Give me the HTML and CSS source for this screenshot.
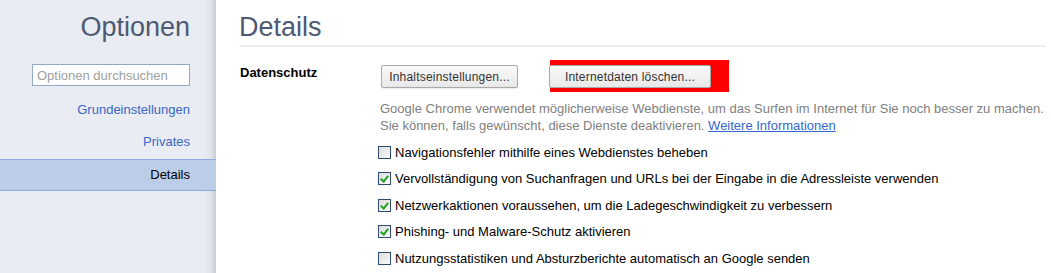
FILE: index.html
```html
<!DOCTYPE html>
<html lang="de">
  <head>
    <meta charset="UTF-8" />
    <title>Optionen - Details</title>
    <link rel="stylesheet" href="styles.css">
  </head>
  <body>
    <div class="page">
      <!-- Seitenleiste -->
      <div class="sidebar">
        <h1 class="side-title">Optionen</h1>
        <div class="search-wrap">
          <input type="text" class="search" placeholder="Optionen durchsuchen" />
        </div>
        <ul class="nav">
          <li class="nav-item">Grundeinstellungen</li>
          <li class="nav-item">Privates</li>
          <li class="nav-item selected">Details</li>
        </ul>
      </div>

      <!-- Inhalt -->
      <div class="main">
        <h2 class="main-title">Details</h2>
        <div class="section">
          <div class="section-label">Datenschutz</div>
          <div class="section-body">
            <div class="buttons">
              <button type="button" class="btn btn-content">Inhaltseinstellungen...</button>
              <span class="marked">
                <button type="button" class="btn btn-clear">Internetdaten löschen...</button>
              </span>
            </div>
            <p class="desc">
              Google Chrome verwendet möglicherweise Webdienste, um das Surfen im Internet für Sie noch besser zu machen.<br />
              Sie können, falls gewünscht, diese Dienste deaktivieren. <a href="#" class="link">Weitere Informationen</a>
            </p>
            <label class="check"><span class="box"></span>Navigationsfehler mithilfe eines Webdienstes beheben</label>
            <label class="check"><span class="box on"></span>Vervollständigung von Suchanfragen und URLs bei der Eingabe in die Adressleiste verwenden</label>
            <label class="check"><span class="box on"></span>Netzwerkaktionen voraussehen, um die Ladegeschwindigkeit zu verbessern</label>
            <label class="check"><span class="box on"></span>Phishing- und Malware-Schutz aktivieren</label>
            <label class="check"><span class="box"></span>Nutzungsstatistiken und Absturzberichte automatisch an Google senden</label>
          </div>
        </div>
      </div>
    </div>
  </body>
</html>
```

FILE: styles.css
```css
/* Grundeinstellungen */
* {
  box-sizing: border-box;
  margin: 0;
  padding: 0;
}

body {
  font-family: Arial, "Liberation Sans", sans-serif;
  font-size: 13px;
  color: #000;
  background: #fff;
  overflow: hidden;
}

.page {
  display: flex;
  height: 273px;
}

/* Seitenleiste */
.sidebar {
  width: 216px;
  flex-shrink: 0;
  background: linear-gradient(to right, #e9ecf2 0, #e9ecf2 204px, #dfe2e8 211px, #c9ccd2 216px);
  padding-right: 26px;
  text-align: right;
}

.side-title {
  font-size: 27px;
  font-weight: normal;
  color: #4e5a73;
  padding-top: 12px;
  height: 64px;
}

.search-wrap {
  padding-left: 32px;
}

.search {
  width: 158px;
  height: 22px;
  border: 1px solid #94a7c4;
  padding: 1px 4px 0;
  font-family: inherit;
  font-size: 13px;
  color: #999;
  outline: none;
}

.search::placeholder {
  color: #a0a0a0;
}

.nav {
  list-style: none;
  margin-top: 9px;
  margin-right: -26px;
}

.nav-item {
  height: 32px;
  line-height: 30px;
  padding-right: 26px;
  color: #3b67c4;
  font-size: 13px;
}

.nav-item.selected {
  background: #bbcde8;
  border-top: 1px solid #8eaadb;
  border-bottom: 1px solid #8eaadb;
  color: #000;
  line-height: 29px;
}

/* Inhalt */
.main {
  flex: 1;
  padding: 0 5px 0 23px;
}

.main-title {
  font-size: 27px;
  font-weight: normal;
  color: #4e5a73;
  padding-top: 12px;
  height: 47px;
  border-bottom: 2px solid #eeeeee;
}

.section {
  display: flex;
  padding-top: 17px;
}

.section-label {
  width: 142px;
  font-weight: bold;
  padding-left: 1px;
  padding-top: 1px;
}

.buttons {
  display: flex;
  gap: 31px;
  align-items: flex-start;
  padding-top: 1px;
}

.btn {
  height: 23px;
  padding: 0;
  font-family: inherit;
  font-size: 12px;
  letter-spacing: 0.2px;
  color: #333;
  background: linear-gradient(#fafafa, #e8e8e8);
  border: 1px solid #a8a8a8;
  border-radius: 2px;
  box-shadow: 0 1px 1px rgba(0, 0, 0, 0.08);
}

.btn-content {
  width: 137px;
}

.btn-clear {
  width: 162px;
}

/* rote Markierung um den Button */
.marked {
  position: relative;
  display: inline-block;
}

.marked::before {
  content: "";
  position: absolute;
  left: 1px;
  top: -5px;
  width: 179px;
  height: 32px;
  background: #ff0000;
}

.marked .btn {
  position: relative;
}

.desc {
  margin-top: 12px;
  margin-left: -1px;
  color: #808080;
  line-height: 17px;
}

.link {
  color: #3366cc;
}

.check {
  display: flex;
  align-items: center;
  height: 26.5px;
  margin-left: -3px;
}

.check:first-of-type {
  margin-top: 5px;
}

.box {
  width: 13px;
  height: 13px;
  border: 1px solid #2f4a6d;
  background: linear-gradient(135deg, #dcdcdc, #fbfbfb);
  margin-right: 4px;
  position: relative;
}

.box.on::after {
  content: "";
  position: absolute;
  left: 3px;
  top: 1px;
  width: 3px;
  height: 6px;
  border: solid #21a121;
  border-width: 0 2px 2px 0;
  transform: rotate(40deg);
}
```
